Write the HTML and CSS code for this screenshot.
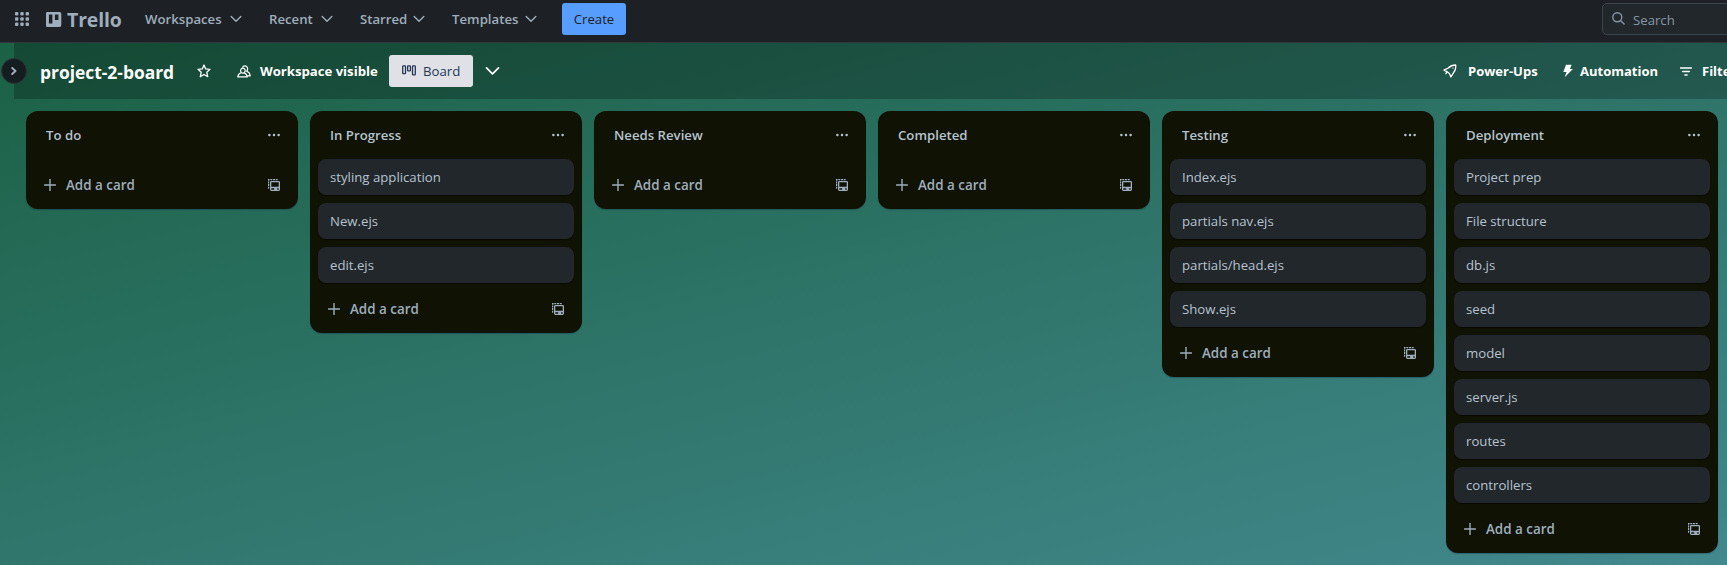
FILE: index.html
```html
<!DOCTYPE html>
<html lang="en">
<head>
<meta charset="utf-8">
<title>project-2-board | Trello</title>
<link rel="stylesheet" href="styles.css">
</head>
<body>
<svg class="defs" width="0" height="0">
  <symbol id="chev" viewBox="0 0 12 8"><path d="M1.200 1.500 6 6.300l4.800-4.800" fill="none" stroke="currentColor" stroke-width="1.400" stroke-linecap="round" stroke-linejoin="round"/></symbol>
  <symbol id="dots" viewBox="0 0 12 4"><circle cx="1.400" cy="2" r="1.250"/><circle cx="6" cy="2" r="1.250"/><circle cx="10.600" cy="2" r="1.250"/></symbol>
  <symbol id="plus" viewBox="0 0 12 12"><path d="M6 .5v11M.5 6h11" fill="none" stroke="currentColor" stroke-width="1.400" stroke-linecap="round"/></symbol>
  <symbol id="template" viewBox="0 0 12 12"><path d="M.6 9.800V.7h9.600" fill="none" stroke="currentColor" stroke-width="1.200" stroke-dasharray="2 .7"/><path fill-rule="evenodd" d="M3.400 1.900h7.200A1.400 1.400 0 0 1 12 3.300v7.300A1.400 1.400 0 0 1 10.600 12H3.400A1.400 1.400 0 0 1 2 10.600V3.300A1.400 1.400 0 0 1 3.400 1.900Zm-.1 1.400v4.500h7.400V3.300ZM3.300 9.300v1.400h2.900V9.300Zm5.900 0v1.400h1.500V9.300Z"/></symbol>
</svg>
<header class="nav">
  <svg class="apps" width="14" height="14" viewBox="0 0 14 14"><g id="r"><rect width="3.400" height="3.400" rx="1"/><rect x="5.300" width="3.400" height="3.400" rx="1"/><rect x="10.600" width="3.400" height="3.400" rx="1"/></g><use href="#r" y="5.300"/><use href="#r" y="10.600"/></svg>
  <div class="logo">
    <svg width="16" height="15" viewBox="0 0 16 15"><path fill-rule="evenodd" d="M1.500 0h12a1.800 1.800 0 0 1 1.800 1.800v11.400a1.800 1.800 0 0 1-1.800 1.800h-12A1.500 1.500 0 0 1 0 13.200V1.800A1.500 1.500 0 0 1 1.500 0ZM2.900 2.600v8.900h3.500V2.600Zm6 0v5.400h3.500V2.600Z"/></svg>
    <span>Trello</span>
  </div>
  <nav class="menu">
    <a class="w1"><span>Workspaces</span><svg class="chev"><use href="#chev"/></svg></a>
    <a class="w2"><span>Recent</span><svg class="chev"><use href="#chev"/></svg></a>
    <a class="w3"><span>Starred</span><svg class="chev"><use href="#chev"/></svg></a>
    <a class="w4"><span>Templates</span><svg class="chev"><use href="#chev"/></svg></a>
  </nav>
  <button class="create">Create</button>
  <div class="search">
    <svg width="13" height="13" viewBox="0 0 13 13"><g fill="none" stroke="currentColor" stroke-width="1.400" stroke-linecap="round"><circle cx="5.300" cy="5.300" r="4.500"/><path d="m8.700 8.700 3.400 3.400"/></g></svg>
    <span>Search</span>
  </div>
</header>
<div class="main">
  <aside class="rail"><button class="expand"><svg width="6" height="8" viewBox="0 0 6 8"><path d="m1.200 1 3.300 3-3.300 3" fill="none" stroke="currentColor" stroke-width="1.900" stroke-linecap="round" stroke-linejoin="round"/></svg></button></aside>
  <main class="board">
    <div class="bar">
      <h1>project-2-board</h1>
      <svg class="star" width="14" height="14" viewBox="0 0 14 14"><path d="m7 1 1.700 3.900 4.300.4-3.200 2.900.9 4.500L7 10.500l-3.700 2.200.9-4.500L1 5.300l4.300-.4Z" fill="none" stroke="currentColor" stroke-width="1.300" stroke-linejoin="round"/></svg>
      <div class="vis">
        <svg width="14" height="13" viewBox="0 0 14 13"><g fill="none" stroke="currentColor" stroke-width="1.200" stroke-linejoin="round"><path d="M3.200 5a2.300 2.500 0 1 1 4.600 0 2.300 2.500 0 0 1-4.600 0Z" transform="translate(.4 .6)"/><path d="M4 7.700C2.100 8.400.9 9.600.8 11.900h9.400c-.1-2.300-1.300-3.500-3.300-4.200M5.400 2.500C6 1.200 7 .7 8.100.8c2.700.2 3.200 3.700 1.500 5.500 2.100.7 3.400 2.300 3.600 4.500h-2.600"/></g></svg>
        <span>Workspace visible</span>
      </div>
      <button class="view">
        <svg width="14" height="11" viewBox="0 0 14 11"><g fill="none" stroke="currentColor" stroke-width="1.300"><rect x=".7" y=".9" width="2.800" height="7.800" rx=".7"/><rect x="5.600" y=".9" width="2.800" height="5" rx=".7"/><rect x="10.500" y=".9" width="2.800" height="9" rx=".7"/></g></svg>
        <span>Board</span>
      </button>
      <svg class="more"><use href="#chev"/></svg>
      <div class="tools">
        <div class="power"><svg width="14" height="14" viewBox="0 0 14 14"><path d="M12.700 1C9.500 1 7.200 2 5.300 4L1 6.100l2.900 1.500 2.700 2.200 1.300 3.200 2.500-4.200C12.200 6.800 13 4.300 12.700 1ZM3.900 7.600l-1 2.100" fill="none" stroke="currentColor" stroke-width="1.300" stroke-linejoin="round" stroke-linecap="round"/><circle cx="9.900" cy="4.100" r=".7"/></svg><span>Power-Ups</span></div>
        <div class="auto"><svg width="10" height="14" viewBox="0 0 10 14"><path d="M3 .8h5.600L7 4.900h2.900L1.700 13.200 3.500 7.900H.3Z"/></svg><span>Automation</span></div>
        <div class="filter"><svg width="12" height="9" viewBox="0 0 12 9"><path d="M.6 1h10.800M2.600 4.500h6.800M4.900 8h2.200" fill="none" stroke="currentColor" stroke-width="1.400" stroke-linecap="round"/></svg><span>Filters</span></div>
      </div>
    </div>
    <div class="lists" id="lists"></div>
  </main>
</div>
<script src="board.js"></script>
</body>
</html>
```
FILE: styles.css
```css
* { box-sizing: border-box; }
html, body { height: 100%; }
body {
  margin: 0;
  overflow: hidden;
  display: flex;
  flex-direction: column;
  font: 13.2px/20px "Open Sans", "Noto Sans", sans-serif;
  color: #b6c2cf;
  background: #1d6547;
}
svg { fill: currentColor; flex: none; display: block; }
span { white-space: nowrap; }
button { font: inherit; border: 0; padding: 0; }
.defs { position: absolute; }

.nav {
  height: 43px;
  flex: none;
  display: flex;
  align-items: center;
  padding: 0 0 6px 15px;
  background: #1d2125;
  border-bottom: 1px solid #31383d;
  color: #9fadbc;
  overflow: hidden;
}
.apps { margin-top: 1px; }
.logo { display: flex; align-items: center; gap: 5px; margin-left: 17px; width: 99px; }
.logo svg { margin-top: 2px; }
.logo span { font: 700 19.400px/20px "Open Sans", sans-serif; letter-spacing: -.1px; margin-top: 3px; }
.menu { display: flex; font-weight: 600; margin-top: 2px; }
.menu a { display: flex; align-items: center; justify-content: space-between; margin-right: 28px; }
.menu .w1 { width: 96px; }
.menu .w2 { width: 63px; }
.menu .w3 { width: 64px; }
.menu .w4 { width: 84px; margin-right: 26px; }
.chev { width: 12px; height: 8px; margin-right: -1px; }
.create { width: 64px; height: 32px; margin-top: 1px; border-radius: 3px; background: #579dff; color: #1d2125; }
.search {
  margin: 1px -40px 0 auto;
  width: 165px;
  height: 32px;
  flex: none;
  display: flex;
  align-items: center;
  gap: 8px;
  padding-left: 9px;
  border: 1px solid #3b444c;
  border-radius: 5px;
  background: #22272b;
  color: #8696a7;
}
.search svg { margin-top: -1px; }
.search span { margin-top: 2px; }

.main {
  flex: 1;
  min-height: 0;
  display: flex;
  background: linear-gradient(166deg, #1b6145 0%, #42888d 100%);
}
.rail { width: 14px; flex: none; }
.expand {
  position: relative;
  z-index: 1;
  width: 26px;
  height: 26px;
  margin: 15px 0 0 1px;
  display: grid;
  place-items: center;
  border: 1px solid #2c3338;
  border-radius: 50%;
  background: #161d20;
  color: #9fadbc;
}
.board { flex: 1; min-width: 0; display: flex; flex-direction: column; }
.bar {
  height: 56px;
  flex: none;
  display: flex;
  align-items: center;
  padding-left: 26px;
  background: rgba(0, 0, 0, .24);
  color: #fff;
  font-weight: 700;
  overflow: hidden;
}
h1 { margin: 2px 0 0; width: 157px; font-size: 17.400px; line-height: 24px; font-weight: 700; white-space: nowrap; }
.star { margin-right: 26px; }
.vis { display: flex; align-items: center; gap: 9px; width: 152px; letter-spacing: -.03px; }
.view {
  width: 84px;
  height: 32px;
  display: flex;
  align-items: center;
  gap: 7px;
  padding-left: 13px;
  border-radius: 3px;
  background: #dfe1e6;
  color: #253858;
  font-weight: 400;
}
.view svg { margin-top: -2px; }
.more { width: 15px; height: 10px; margin-left: 12px; }
.tools { margin-left: auto; display: flex; width: 284px; flex: none; font-size: 13px; }
.tools > div { display: flex; align-items: center; flex: none; }
.power { width: 120px; gap: 11px; }
.auto { width: 117px; gap: 7px; }
.filter { gap: 10px; }

.lists { display: flex; align-items: flex-start; gap: 12px; padding: 12px 9px 0 12px; }
.list {
  width: 272px;
  flex: none;
  border-radius: 12px;
  background: #101204;
  box-shadow: 0 1px 1px rgba(9, 30, 66, .3);
}
.list header { height: 48px; display: flex; align-items: center; justify-content: space-between; padding: 0 18px 0 20px; }
.list h2 { margin: 0; font-size: 13.200px; line-height: 20px; font-weight: 600; }
.dots { width: 12px; height: 4px; }
.cards { display: grid; gap: 8px; margin: 0 8px; }
.card { height: 36px; padding: 8px 12px; border-radius: 8px; background: #22272b; box-shadow: 0 1px 1px rgba(3, 4, 4, .5); }
.list footer { height: 50px; display: flex; align-items: center; padding: 1px 18px 0; color: #9fadbc; font-size: 13.400px; font-weight: 600; }
.list footer span { flex: 1; margin-left: 10px; }
.icon { width: 12px; height: 12px; }
```
FILE: board.js
```js
const lists = [
  ["To do", []],
  ["In Progress", ["styling application", "New.ejs", "edit.ejs"]],
  ["Needs Review", []],
  ["Completed", []],
  ["Testing", ["Index.ejs", "partials nav.ejs", "partials/head.ejs", "Show.ejs"]],
  ["Deployment", ["Project prep", "File structure", "db.js", "seed", "model", "server.js", "routes", "controllers"]]
];
document.getElementById("lists").innerHTML = lists.map(([title, cards]) => `
  <section class="list">
    <header><h2>${title}</h2><svg class="dots"><use href="#dots"/></svg></header>
    <div class="cards">${cards.map(c => `<div class="card">${c}</div>`).join("")}</div>
    <footer><svg class="icon"><use href="#plus"/></svg><span>Add a card</span><svg class="icon"><use href="#template"/></svg></footer>
  </section>`).join("");
```
